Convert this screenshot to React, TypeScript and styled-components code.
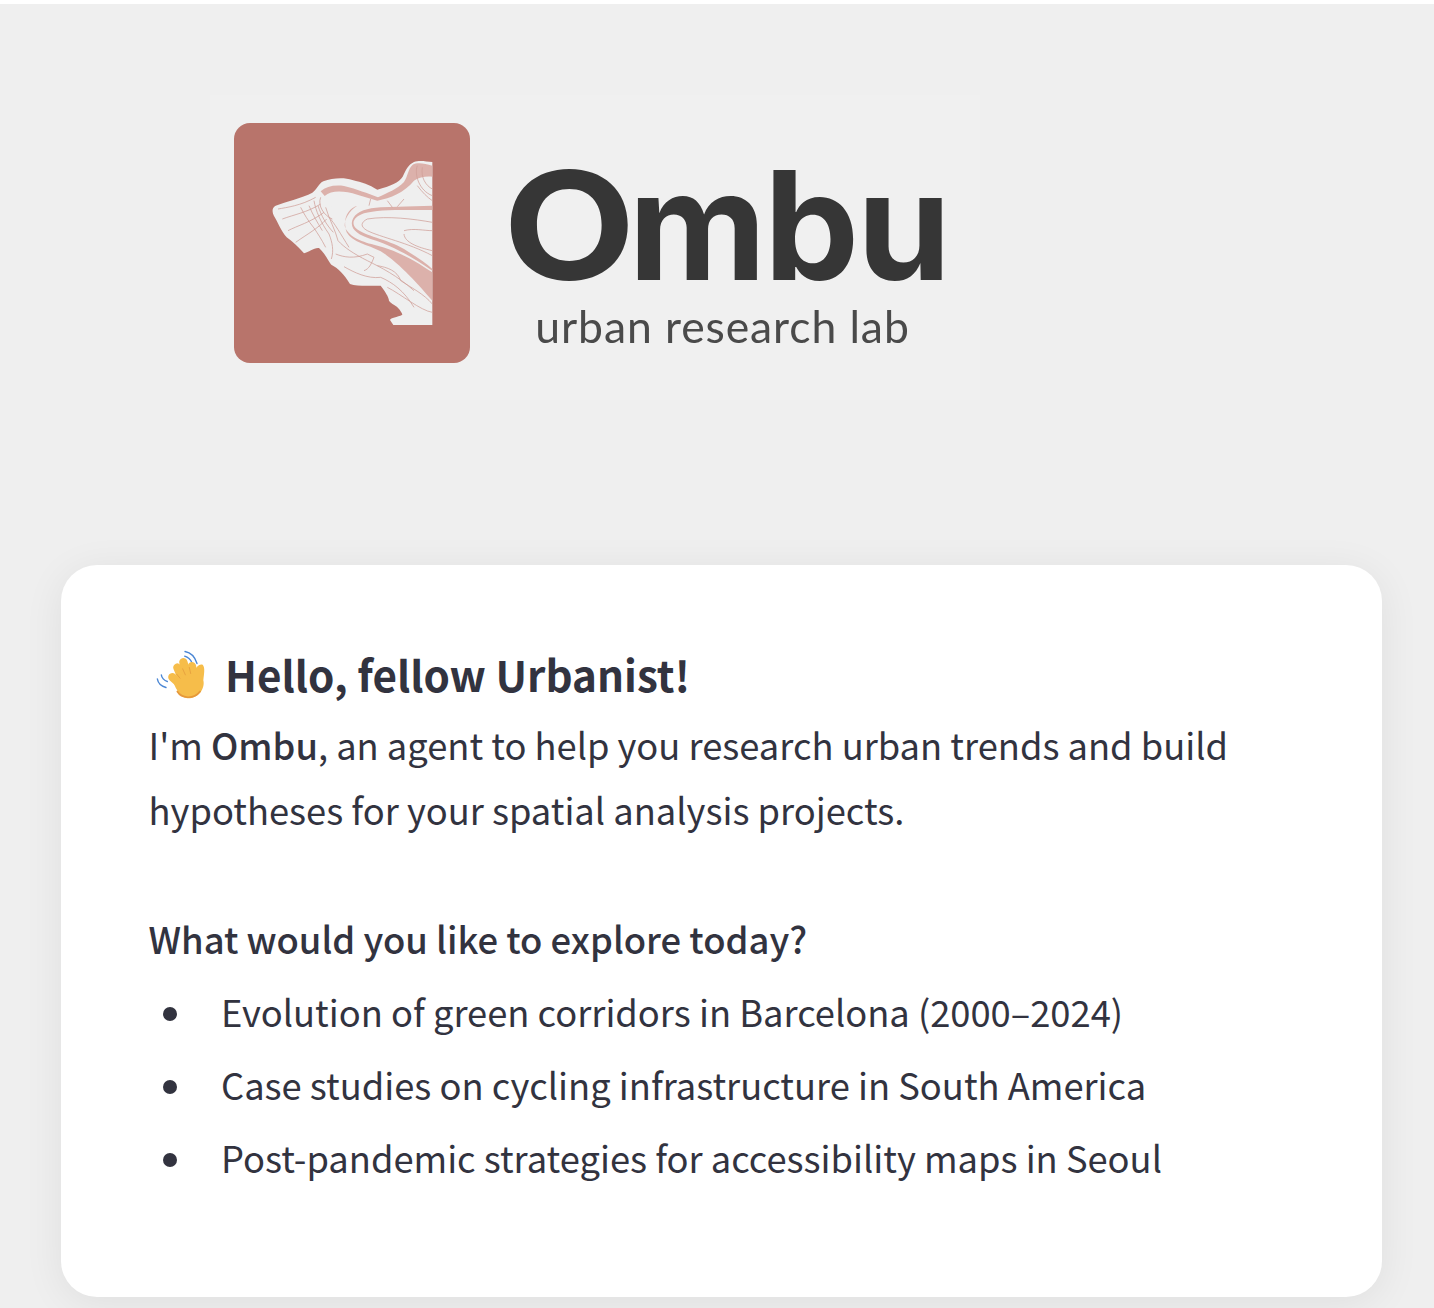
import * as React from "react";
import styled, { createGlobalStyle } from "styled-components";

const GlobalStyle = createGlobalStyle`
  html, body {
    margin: 0;
    padding: 0;
    background: #efefef;
  }
  * {
    box-sizing: border-box;
  }
`;

const Page = styled.div`
  display: flex;
  flex-direction: column;
  height: 1308px;
  overflow: hidden;
  border-top: 4px solid #ffffff;
  padding: 91px 52px 11px 61px;
  background: #efefef;
  font-family: "Noto Sans CJK JP", "Noto Sans", sans-serif;
  color: #32333f;
`;

const LogoFrame = styled.div`
  display: flex;
  align-items: flex-start;
  gap: 36px;
  width: 770px;
  height: 305px;
  margin-left: 149px;
  padding: 28px 0 0 24px;
  background: #f0f0f0;
  filter: blur(0.7px);
`;

const LogoTile = styled.div`
  display: flex;
  width: 236px;
  height: 240px;
  border-radius: 16px;
  background: #b8746b;
`;

const Wordmark = styled.div`
  display: flex;
  flex-direction: column;
  align-items: center;
  width: 442px;
`;

const BrandName = styled.div`
  display: flex;
  margin-top: 31px;
  margin-left: -2px;
  height: 142px;
  font-family: Inter, sans-serif;
  font-size: 151px;
  font-weight: 700;
  line-height: 142px;
  letter-spacing: -2.2px;
  color: #363636;
`;

const BrandInitial = styled.span`
  display: inline-block;
  margin-right: 11px;
  transform: scaleX(1.14);
  transform-origin: left center;
`;

const BrandTagline = styled.div`
  margin-top: 4px;
  margin-right: 9px;
  font-family: Lato, sans-serif;
  font-size: 44.5px;
  line-height: 52px;
  letter-spacing: 0.9px;
  color: #4a4a4a;
`;

const Card = styled.section`
  display: flex;
  flex-direction: column;
  width: 1321px;
  height: 732px;
  margin-top: 165px;
  padding: 74px 88px 0 87.5px;
  border-radius: 36px;
  background: #ffffff;
  box-shadow: 0 6px 40px rgba(0, 0, 0, 0.07);
`;

const Greeting = styled.h1`
  display: flex;
  align-items: center;
  gap: 13.5px;
  height: 70px;
  margin: 0;
  font-size: 42.2px;
  font-weight: 600;
  line-height: 70px;
`;

const Wave = styled.svg`
  flex: none;
  margin-top: 3px;
`;

const Intro = styled.p`
  margin: 3px 0 0;
  font-size: 36.3px;
  line-height: 65px;
  font-weight: 400;

  strong {
    font-weight: 500;
  }
`;

const Prompt = styled.h2`
  margin: 64px 0 0;
  font-size: 36.4px;
  line-height: 65px;
  font-weight: 500;
`;

const Suggestions = styled.ul`
  display: flex;
  flex-direction: column;
  gap: 8px;
  margin: 8px 0 0;
  padding: 0;
  list-style: none;
`;

const Suggestion = styled.li`
  display: flex;
  align-items: center;
  gap: 44px;
  height: 65px;
  padding-left: 14.5px;
  font-size: 36.3px;
  line-height: 65px;
`;

const Bullet = styled.span`
  flex: none;
  width: 14px;
  height: 14px;
  margin-top: 5px;
  border-radius: 50%;
  background: #32333f;
`;

const HandIcon = () => (
  <Wave width="63" height="63" viewBox="27 13.5 189 189">
    <g fill="none" stroke="#4a86d4" strokeWidth="4" strokeLinecap="round">
      <path d="M135 36c16 3 30 16 36 36" />
      <path d="M134 50c10 3 18 11 22 20" />
      <path d="M52 118c2 12 12 22 26 26" />
      <path d="M64 106c1 8 8 18 18 20" />
    </g>
    <g fill="none" stroke="#f6bd4a" strokeWidth="25" strokeLinecap="round">
      <path d="M118 132L97 113" />
      <path d="M128 122L112 84" />
      <path d="M143 112L130 68" />
      <path d="M160 112L156 80" />
    </g>
    <path
      fill="#f6bd4a"
      d="M100 128C104 104 130 100 158 102C164 88 178 70 188 76C196 84 192 104 190 122C196 146 176 178 142 176C122 174 108 150 100 128Z"
    />
    <path
      fill="none"
      stroke="#e6983a"
      strokeWidth="5"
      strokeLinecap="round"
      d="M112 156C124 176 160 182 180 156"
    />
    <path
      fill="none"
      stroke="#e8a33f"
      strokeWidth="3"
      strokeLinecap="round"
      d="M120 116L110 104M136 106L128 88M152 102L148 84"
    />
  </Wave>
);

const TerrainMark = () => (
  <svg width="236" height="240" viewBox="100 97 708 720">
    <path
      fill="#efefef"
      d="M695 214C675 212 655 208 640 214C622 222 615 240 606 258C595 276 570 285 530 297C505 282 485 275 455 268C430 260 395 262 368 272C352 280 350 296 335 306C305 322 250 335 225 345C212 352 215 365 220 376C232 395 240 420 258 440C275 452 292 468 310 488C325 484 340 470 355 472C375 490 385 515 392 522C412 532 430 550 448 580C470 588 510 585 540 585C552 600 565 620 565 630C572 640 588 645 590 650C600 660 604 668 605 672C590 680 570 680 568 688L578 703L695 703Z"
    />
    <g fill="#dcb1ab">
      <path d="M695 540C650 510 590 470 510 445C470 432 442 412 458 382C470 362 500 352 540 350L695 345L695 358C620 358 530 355 490 368C462 378 450 395 465 412C490 436 560 445 610 475C650 500 680 520 695 535Z" />
      <path d="M695 545C650 515 590 478 520 462C480 452 440 436 432 405C432 385 445 360 470 345C440 355 425 385 438 425C455 455 500 462 540 482C600 520 660 590 695 630Z" />
      <path d="M695 225C672 218 650 214 636 222C622 234 622 256 610 274C590 296 560 306 532 320C500 308 470 296 430 286C400 282 376 288 360 302L372 316C392 298 430 300 470 312L530 330C570 322 610 306 640 270C655 258 680 256 695 258Z" />
    </g>
    <path fill="#efefef" d="M390 345C400 322 432 300 455 312C458 330 425 362 398 362Z" />
    <g fill="none" stroke="#cf9d97" strokeWidth="2.2">
      <path d="M610 420C640 412 670 420 695 420M610 430C612 455 650 470 695 480" />
      <path d="M695 395C640 385 560 375 500 385C480 395 478 408 500 420C540 440 620 455 695 495" />
      <path d="M232 355C260 350 300 345 345 320M245 385C280 372 320 365 360 340M262 420C290 405 330 395 370 365M285 455C320 430 350 415 378 385" />
      <path d="M300 350C310 370 322 390 340 412C352 430 362 445 375 470M340 330C345 360 360 395 385 430C395 455 400 480 392 505" />
      <path d="M375 350C385 385 405 420 412 450C430 470 460 490 500 510C540 530 590 555 640 600" />
      <path d="M405 490C430 500 460 505 500 490L520 500C512 520 505 535 490 540M430 528C460 545 500 565 540 560C575 575 610 600 640 650M560 590C600 610 660 660 695 665" />
      <path d="M530 525C560 530 590 540 600 570M600 570C630 590 670 610 695 640" />
      <path d="M510 325L505 345M560 330L575 350M610 325L590 348M650 285C665 305 680 320 695 330" />
      <path d="M385 380C400 395 420 430 445 470" />
      <path d="M650 225C640 250 655 300 695 315M665 230C660 260 675 285 695 295M360 320C350 345 370 375 395 385" />
      <path d="M352 345C362 375 375 400 398 425M325 345C335 370 350 395 365 420" />
    </g>
  </svg>
);

const App = () => (
  <Page>
    <GlobalStyle />
    <LogoFrame>
      <LogoTile>
        <TerrainMark />
      </LogoTile>
      <Wordmark>
        <BrandName>
          <BrandInitial>O</BrandInitial>mbu
        </BrandName>
        <BrandTagline>urban research lab</BrandTagline>
      </Wordmark>
    </LogoFrame>
    <Card>
      <Greeting>
        <HandIcon />
        Hello, fellow Urbanist!
      </Greeting>
      <Intro>
        I'm <strong>Ombu</strong>, an agent to help you research urban trends
        and build hypotheses for your spatial analysis projects.
      </Intro>
      <Prompt>What would you like to explore today?</Prompt>
      <Suggestions>
        <Suggestion>
          <Bullet />
          Evolution of green corridors in Barcelona (2000–2024)
        </Suggestion>
        <Suggestion>
          <Bullet />
          Case studies on cycling infrastructure in South America
        </Suggestion>
        <Suggestion>
          <Bullet />
          Post-pandemic strategies for accessibility maps in Seoul
        </Suggestion>
      </Suggestions>
    </Card>
  </Page>
);

export default App;
